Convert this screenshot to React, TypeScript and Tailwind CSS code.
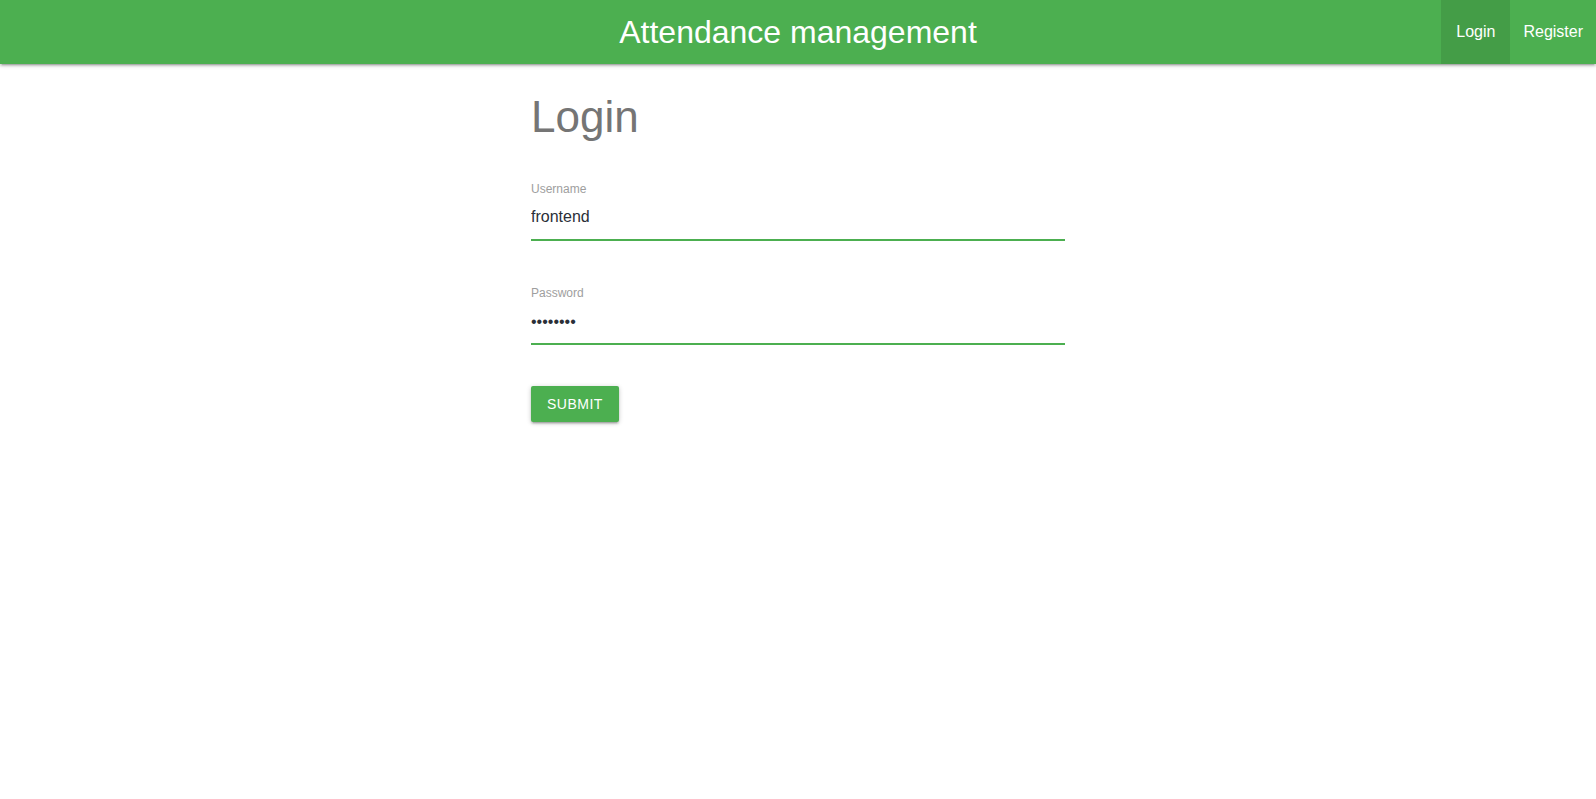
import { useState } from "react";

export default function App() {
  const [username, setUsername] = useState("frontend");
  const [password, setPassword] = useState("password");

  return (
    <div className="min-h-screen bg-white font-['Liberation_Sans',Arial,sans-serif]">
      <nav className="relative z-10 h-16 bg-[#4caf50] text-white shadow-[0_2px_2px_0_rgba(0,0,0,0.14),0_3px_1px_-2px_rgba(0,0,0,0.12),0_1px_5px_0_rgba(0,0,0,0.2)]">
        <div className="grid h-full grid-cols-[1fr_auto_1fr]">
          <div />
          <a className="flex items-center text-[32px] leading-none">Attendance management</a>
          <ul className="flex justify-end h-full">
            <li className="flex h-full items-center bg-black/10 px-[15px] text-base">Login</li>
            <li className="flex h-full items-center px-[13px] text-base">Register</li>
          </ul>
        </div>
      </nav>

      <main className="mx-auto w-[534px]">
        <h3 className="mt-7 text-[44px] leading-[1.15] text-[#757575]">Login</h3>

        <form className="mt-[39px]" onSubmit={(e) => e.preventDefault()}>
          <div>
            <label className="block text-xs leading-[14px] text-[#9e9e9e]">Username</label>
            <input
              className="mt-[2px] block h-[43px] w-full border-b-2 border-[#4caf50] bg-transparent pb-[3px] text-base text-[#2b2f38] outline-none"
              value={username}
              onChange={(e) => setUsername(e.target.value)}
            />
          </div>

          <div className="mt-[45px]">
            <label className="block text-xs leading-[14px] text-[#9e9e9e]">Password</label>
            <input
              type="password"
              className="mt-[2px] block h-[43px] w-full border-b-2 border-[#4caf50] bg-transparent text-base text-[#2b2f38] outline-none"
              value={password}
              onChange={(e) => setPassword(e.target.value)}
            />
          </div>

          <button
            type="submit"
            className="mt-[41px] h-9 rounded-[2px] bg-[#4caf50] px-4 text-sm uppercase tracking-[0.5px] text-white shadow-[0_2px_2px_0_rgba(0,0,0,0.14),0_3px_1px_-2px_rgba(0,0,0,0.12),0_1px_5px_0_rgba(0,0,0,0.2)]"
          >
            Submit
          </button>
        </form>
      </main>
    </div>
  );
}
